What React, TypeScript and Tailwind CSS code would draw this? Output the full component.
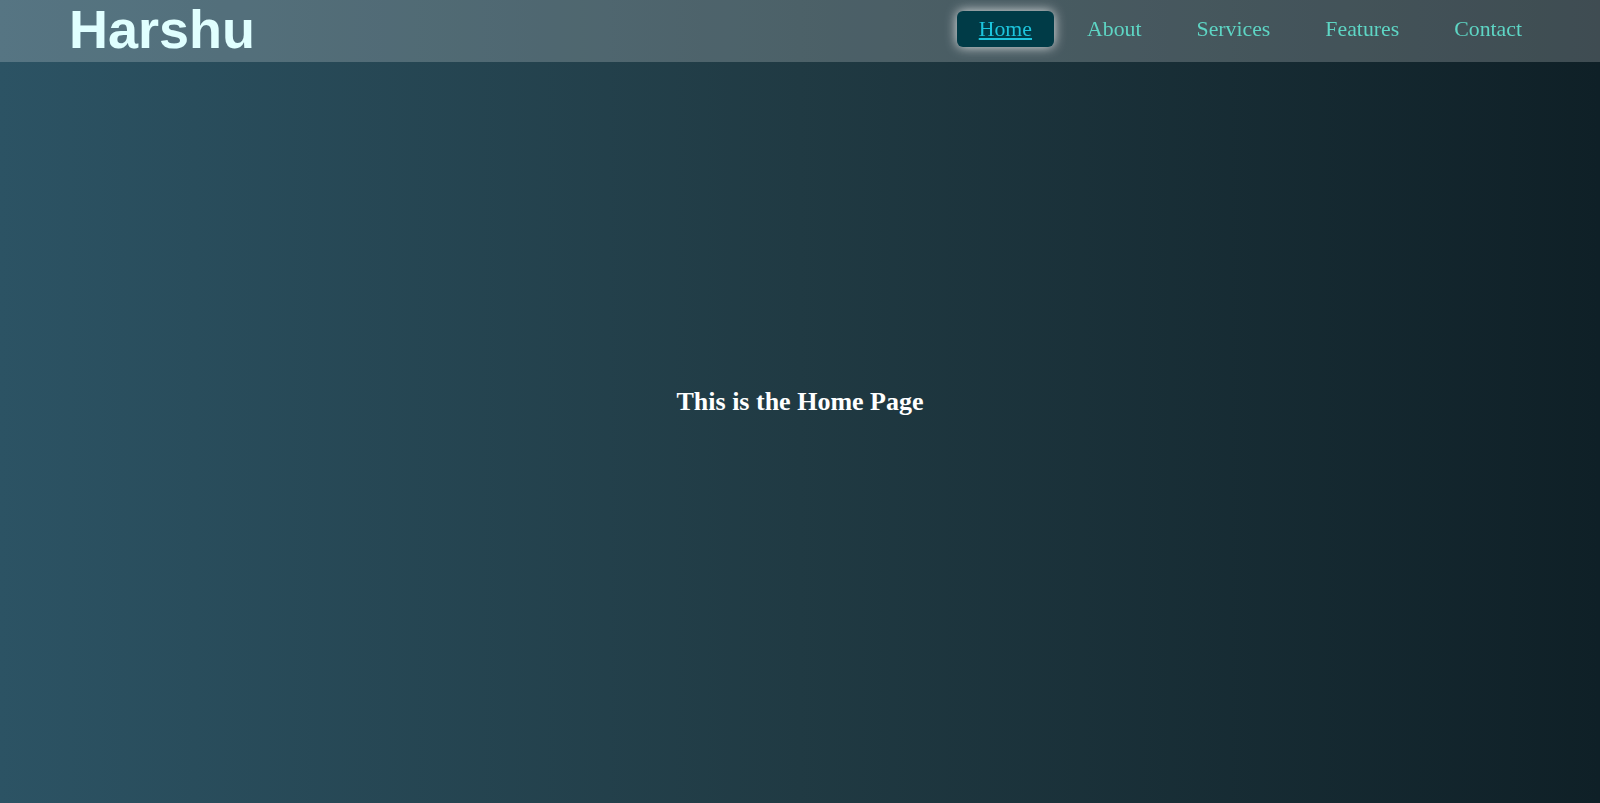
import { useState } from 'react'

const links = ['Home', 'About', 'Services', 'Features', 'Contact'] as const

type Link = (typeof links)[number]

export default function App() {
  const [active, setActive] = useState<Link>('Home')

  return (
    <div className="relative min-h-screen w-full bg-[linear-gradient(to_right,#2c5364,#203a43,#0f2027)] font-['Liberation_Serif','Times_New_Roman',serif]">
      {/* Top bar, sits over the page */}
      <header className="fixed inset-x-0 top-0 z-10 flex h-[62px] items-start justify-between bg-white/20 pl-[69px] pr-[56px]">
        <div className="font-['Liberation_Sans',Arial,sans-serif] text-[54px] font-bold leading-[58px] text-[#e0ffff]">
          Harshu
        </div>
        <nav className="mt-[11px] flex gap-[11px]">
          {links.map((link) => (
            <a
              key={link}
              href="#"
              onClick={(e) => {
                e.preventDefault()
                setActive(link)
              }}
              className={
                active === link
                  ? 'flex h-[36px] items-center rounded-md bg-[#003b47] px-[22px] text-[21.8px] text-[#1cc5dd] underline shadow-[0_0_12px_rgba(255,255,255,0.85)]'
                  : 'flex h-[36px] items-center px-[22px] text-[21.8px] text-[#5ed5c4] no-underline'
              }
            >
              {link}
            </a>
          ))}
        </nav>
      </header>

      {/* Page content */}
      <main className="flex min-h-screen items-center justify-center">
        <h2 className="text-[26px] font-bold text-white">This is the {active} Page</h2>
      </main>
    </div>
  )
}
